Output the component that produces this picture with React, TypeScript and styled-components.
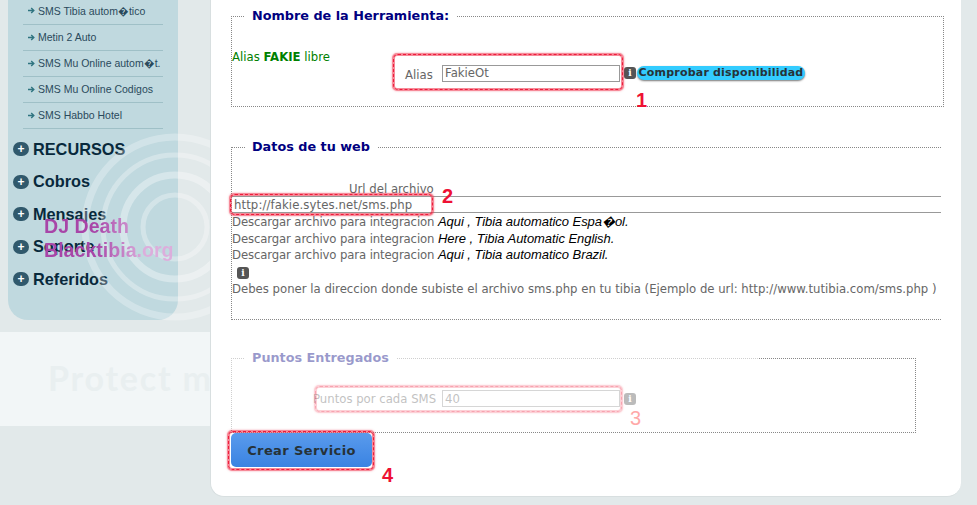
import React from "react";
import styled, { createGlobalStyle } from "styled-components";

const GlobalStyle = createGlobalStyle`
  html, body {
    margin: 0;
    padding: 0;
    background: #e2e9ea;
    overflow: hidden;
  }
`;

const subItems = [
  "SMS Tibia autom\uFFFDtico",
  "Metin 2 Auto",
  "SMS Mu Online autom\uFFFDt.",
  "SMS Mu Online Codigos",
  "SMS Habbo Hotel",
];

const sections = ["RECURSOS", "Cobros", "Mensajes", "Soporte", "Referidos"];

const downloads = [
  { link: "Aqui", name: "Tibia automatico Espa\uFFFDol." },
  { link: "Here", name: "Tibia Automatic English." },
  { link: "Aqui", name: "Tibia automatico Brazil." },
];

function InfoBadge() {
  return <Info>i</Info>;
}

function Rings() {
  return (
    <RingsSvg viewBox="0 0 220 220" width="220" height="220">
      <circle cx="110" cy="110" r="32" fill="none" stroke="#fff" strokeOpacity="0.3" strokeWidth="5" />
      <circle cx="110" cy="110" r="52" fill="none" stroke="#fff" strokeOpacity="0.35" strokeWidth="7" />
      <circle cx="110" cy="110" r="72" fill="none" stroke="#fff" strokeOpacity="0.3" strokeWidth="5" />
      <circle cx="110" cy="110" r="90" fill="none" stroke="#fff" strokeOpacity="0.28" strokeWidth="7" />
    </RingsSvg>
  );
}

export default function App() {
  return (
    <Page>
      <GlobalStyle />
      <Sidebar>
        <SubList>
          {subItems.map((item) => (
            <SubItem key={item}>
              <svg width="7" height="7" viewBox="0 0 7 7">
                <path d="M0 3.5h5M3.2 1l2.6 2.5L3.2 6" fill="none" stroke="#2f7480" strokeWidth="1.4" />
              </svg>
              {item}
            </SubItem>
          ))}
        </SubList>
        <SectionList>
          {sections.map((name) => (
            <Section key={name}>
              <Plus>+</Plus>
              {name}
            </Section>
          ))}
        </SectionList>
      </Sidebar>

      <Rings />
      <ProtectBand>
        <ProtectText>Protect m</ProtectText>
      </ProtectBand>
      <Stamp>
        <span>DJ Death</span>
        <span>Blacktibia.org</span>
      </Stamp>

      <Main>
        <ToolFieldset>
          <Legend>Nombre de la Herramienta:</Legend>
          <AliasStatus>
            Alias <strong>FAKIE</strong> libre
          </AliasStatus>
          <AliasRow>
            <AliasLabel>Alias</AliasLabel>
            <TextInput readOnly value="FakieOt" />
            <InfoBadge />
            <CheckButton>Comprobar disponibilidad</CheckButton>
          </AliasRow>
        </ToolFieldset>

        <WebFieldset>
          <Legend>Datos de tu web</Legend>
          <UrlLabel>Url del archivo</UrlLabel>
          <UrlInput readOnly value="http://fakie.sytes.net/sms.php" />
          {downloads.map((d) => (
            <DownloadLine key={d.name}>
              Descargar archivo para integracion <em>{d.link} , {d.name}</em>
            </DownloadLine>
          ))}
          <HelpIcon>
            <InfoBadge />
          </HelpIcon>
          <HelpLine>
            Debes poner la direccion donde subiste el archivo sms.php en tu tibia (Ejemplo de url: http://www.tutibia.com/sms.php )
          </HelpLine>
        </WebFieldset>

        <PointsFieldset>
          <Legend>Puntos Entregados</Legend>
          <PointsRow>
            <PointsLabel>Puntos por cada SMS</PointsLabel>
            <TextInput readOnly value="40" />
            <InfoBadge />
          </PointsRow>
        </PointsFieldset>

        <CreateButton>Crear Servicio</CreateButton>
      </Main>

      <FadeOverlay />

      <Scribble $x={392} $y={53} $w={232} $h={38} />
      <Scribble $x={229} $y={193} $w={205} $h={23} />
      <Scribble $x={314} $y={385} $w={309} $h={28} $faded />
      <Scribble $x={227} $y={430} $w={148} $h={41} />
      <Mark $x={636} $y={89}>1</Mark>
      <Mark $x={442} $y={185}>2</Mark>
      <Mark $x={630} $y={407} $faded>3</Mark>
      <Mark $x={382} $y={464}>4</Mark>
    </Page>
  );
}

const Page = styled.div`
  position: relative;
  display: flex;
  align-items: flex-start;
  width: 977px;
  height: 505px;
  overflow: hidden;
  background: #e2e9ea;
  font-family: "DejaVu Sans", sans-serif;
`;

const Sidebar = styled.aside`
  width: 170px;
  height: 320px;
  margin-left: 8px;
  flex-shrink: 0;
  background: #c0d9df;
  border-radius: 0 0 20px 20px;
  font-family: "Liberation Sans", Arial, sans-serif;
`;

const SubList = styled.ul`
  list-style: none;
  margin: 0 15px;
  padding: 0;
`;

const SubItem = styled.li`
  display: flex;
  align-items: center;
  gap: 3px;
  box-sizing: border-box;
  height: 26px;
  padding: 0 0 1px 5px;
  border-bottom: 1px solid #9fc0c7;
  font-size: 10.5px;
  color: #2a4a5c;
  white-space: nowrap;
  &:first-child {
    height: 25px;
    padding-bottom: 3px;
  }
`;

const SectionList = styled.ul`
  list-style: none;
  margin: 4px 0 0 5px;
  padding: 0;
`;

const Section = styled.li`
  display: flex;
  align-items: center;
  gap: 4px;
  height: 32.5px;
  font-size: 16.3px;
  font-weight: 700;
  color: #08293c;
`;

const Plus = styled.span`
  display: flex;
  align-items: center;
  justify-content: center;
  width: 16px;
  height: 14px;
  border-radius: 7px;
  background: #30596c;
  color: #fff;
  font-size: 12px;
  line-height: 14px;
`;

const RingsSvg = styled.svg`
  position: absolute;
  left: 65px;
  top: 117px;
`;

const ProtectBand = styled.div`
  position: absolute;
  left: 0;
  top: 332px;
  width: 211px;
  height: 94px;
  background: #f2f6f7;
  overflow: hidden;
`;

const ProtectText = styled.div`
  margin: 25px 0 0 48px;
  font-family: Lato, sans-serif;
  font-size: 34px;
  font-weight: 700;
  letter-spacing: 1.8px;
  line-height: 42px;
  color: #e9eff0;
  white-space: nowrap;
`;

const Stamp = styled.div`
  position: absolute;
  left: 44px;
  top: 214px;
  display: flex;
  flex-direction: column;
  font-family: "Liberation Sans", Arial, sans-serif;
  font-size: 19.6px;
  font-weight: 700;
  line-height: 24px;
  white-space: nowrap;
  span {
    background: linear-gradient(90deg, #a845a8 0 52px, #dcaedc 100px);
    -webkit-background-clip: text;
    background-clip: text;
    color: transparent;
  }
`;

const Main = styled.main`
  position: relative;
  box-sizing: border-box;
  width: 751px;
  height: 497px;
  margin-left: 32px;
  padding: 8px 0 0 20px;
  flex-shrink: 0;
  background: #fff;
  border-left: 1px solid #d8dfe0;
  border-bottom: 1px solid #d8dfe0;
  border-radius: 0 0 14px 14px;
`;

const Fieldset = styled.fieldset`
  box-sizing: border-box;
  margin: 0;
  padding: 0;
  border: 1px dotted #888;
  min-width: 0;
`;

const ToolFieldset = styled(Fieldset)`
  width: 713px;
  height: 99px;
  padding-top: 25px;
`;

const WebFieldset = styled(Fieldset)`
  width: 710px;
  height: 181px;
  margin-top: 32px;
  border-right: none;
  padding-top: 27px;
`;

const PointsFieldset = styled(Fieldset)`
  width: 685px;
  height: 83px;
  margin-top: 30px;
  padding-top: 24px;
`;

const Legend = styled.legend`
  margin-left: 13px;
  padding: 0 7px;
  font-size: 12.8px;
  font-weight: 700;
  line-height: 16px;
  color: #000080;
`;

const AliasStatus = styled.div`
  font-size: 11.7px;
  line-height: 16px;
  color: #008000;
  strong {
    font-weight: 700;
  }
`;

const AliasRow = styled.div`
  display: flex;
  align-items: center;
  height: 16px;
  margin: 0 0 0 173px;
`;

const AliasLabel = styled.label`
  width: 37px;
  font-size: 11.7px;
  color: #666;
  position: relative;
  top: 2px;
`;

const TextInput = styled.input`
  box-sizing: border-box;
  width: 178px;
  height: 17px;
  margin: 0 4px 0 0;
  padding: 0 2px;
  border: 1px solid #999;
  outline: none;
  font-family: "DejaVu Sans", sans-serif;
  font-size: 11.7px;
  color: #666;
  background: #fff;
`;

const Info = styled.span`
  display: inline-flex;
  align-items: center;
  justify-content: center;
  width: 12px;
  height: 12px;
  border-radius: 3px;
  background: #555;
  color: #fff;
  font-family: "DejaVu Serif", serif;
  font-size: 9px;
  font-weight: 700;
  line-height: 12px;
`;

const CheckButton = styled.button`
  height: 14px;
  width: 168px;
  margin-left: 1px;
  padding: 0;
  border: none;
  border-radius: 7px;
  background: #33ccff;
  box-shadow: 0 1px 2px #777;
  color: #263238;
  font-family: "DejaVu Sans", sans-serif;
  font-size: 11px;
  font-weight: 700;
  letter-spacing: 0.2px;
  line-height: 14px;
  white-space: nowrap;
`;

const UrlLabel = styled.div`
  margin-left: 117px;
  font-size: 11.7px;
  line-height: 14px;
  color: #666;
`;

const UrlInput = styled.input`
  display: block;
  box-sizing: border-box;
  width: 709px;
  height: 17px;
  margin: 0 0 1px;
  padding: 0 2px;
  border: none;
  border-top: 1px solid #999;
  border-bottom: 1px solid #999;
  outline: none;
  font-family: "DejaVu Sans", sans-serif;
  font-size: 11.7px;
  letter-spacing: 0.1px;
  color: #666;
`;

const HelpLine = styled.div`
  font-size: 11.7px;
  line-height: 16.7px;
  color: #666;
  white-space: nowrap;
`;

const DownloadLine = styled(HelpLine)`
  letter-spacing: -0.12px;
  em {
    color: #000;
    font-family: "Liberation Sans", Arial, sans-serif;
    font-size: 13px;
    letter-spacing: -0.05px;
  }
`;

const HelpIcon = styled.div`
  display: flex;
  align-items: center;
  height: 17px;
  padding-left: 5px;
`;

const PointsRow = styled.div`
  display: flex;
  align-items: center;
  height: 17px;
  margin-left: 81px;
`;

const PointsLabel = styled.label`
  width: 129px;
  font-size: 11.7px;
  color: #666;
  white-space: nowrap;
`;

const CreateButton = styled.button`
  display: block;
  width: 141px;
  height: 34px;
  margin: 0;
  padding: 0;
  border: none;
  border-radius: 5px;
  background: linear-gradient(#5a9bec, #3a83e2);
  color: #263238;
  font-family: "DejaVu Sans", sans-serif;
  font-size: 13px;
  font-weight: 700;
  letter-spacing: 0.4px;
`;

const FadeOverlay = styled.div`
  position: absolute;
  left: 220px;
  top: 345px;
  width: 538px;
  height: 85px;
  background: rgba(255, 255, 255, 0.6);
`;

const Scribble = styled.div<{ $x: number; $y: number; $w: number; $h: number; $faded?: boolean }>`
  position: absolute;
  box-sizing: border-box;
  left: ${(p) => p.$x}px;
  top: ${(p) => p.$y}px;
  width: ${(p) => p.$w}px;
  height: ${(p) => p.$h}px;
  border: 3px solid rgba(240, 60, 84, 0.6);
  border-radius: 5px;
  box-shadow: 0 0 2px rgba(240, 60, 84, 0.5);
  opacity: ${(p) => (p.$faded ? 0.4 : 1)};
  &::after {
    content: "";
    position: absolute;
    inset: -2px;
    border: 1px dashed #ee1c3c;
    border-radius: 5px;
  }
`;

const Mark = styled.span<{ $x: number; $y: number; $faded?: boolean }>`
  position: absolute;
  left: ${(p) => p.$x}px;
  top: ${(p) => p.$y}px;
  font-family: "Liberation Sans", Arial, sans-serif;
  font-size: 20px;
  font-weight: ${(p) => (p.$faded ? 400 : 700)};
  line-height: 22px;
  color: ${(p) => (p.$faded ? "#ffa8a8" : "#ee1133")};
`;
